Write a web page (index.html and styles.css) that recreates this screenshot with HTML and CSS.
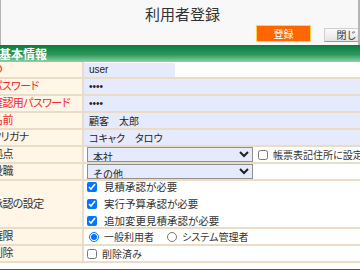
FILE: index.html
```html
<!DOCTYPE html>
<html lang="ja">
<head>
<meta charset="UTF-8">
<title>利用者登録</title>
<link rel="stylesheet" href="styles.css">
</head>
<body>
<div class="header">
    <h1 class="title">利用者登録</h1>
    <div class="actions">
        <button class="btn btn-primary">登録</button>
        <button class="btn">閉じる</button>
    </div>
</div>

<div class="section">
    <div class="section-title">基本情報</div>
    <table class="form">
        <colgroup>
            <col class="label-col">
            <col>
        </colgroup>
        <tr class="first-row">
            <td class="label required">ID</td>
            <td class="value"><input type="text" class="field short" value="user"></td>
        </tr>
        <tr>
            <td class="label required">パスワード</td>
            <td class="value"><input type="password" class="field" value="pass"></td>
        </tr>
        <tr>
            <td class="label required">確認用パスワード</td>
            <td class="value"><input type="password" class="field" value="pass"></td>
        </tr>
        <tr>
            <td class="label required">名前</td>
            <td class="value"><input type="text" class="field" value="顧客　太郎"></td>
        </tr>
        <tr>
            <td class="label">フリガナ</td>
            <td class="value"><input type="text" class="field" value="コキャク　タロウ"></td>
        </tr>
        <tr>
            <td class="label">拠点</td>
            <td class="value">
                <div class="inline">
                    <select class="select"><option>本社</option></select>
                    <label class="check"><input type="checkbox"> 帳票表記住所に設定する</label>
                </div>
            </td>
        </tr>
        <tr>
            <td class="label">役職</td>
            <td class="value"><select class="select"><option>その他</option></select></td>
        </tr>
        <tr class="multi-row">
            <td class="label">承認の設定</td>
            <td class="value">
                <div class="check-list">
                    <label class="check"><input type="checkbox" checked> 見積承認が必要</label>
                    <label class="check"><input type="checkbox" checked> 実行予算承認が必要</label>
                    <label class="check"><input type="checkbox" checked> 追加変更見積承認が必要</label>
                </div>
            </td>
        </tr>
        <tr>
            <td class="label">権限</td>
            <td class="value">
                <div class="inline radios">
                    <label class="check"><input type="radio" name="role" checked> 一般利用者</label>
                    <label class="check"><input type="radio" name="role"> システム管理者</label>
                </div>
            </td>
        </tr>
        <tr class="last-row">
            <td class="label">削除</td>
            <td class="value"><label class="check"><input type="checkbox"> 削除済み</label></td>
        </tr>
    </table>
    <div class="section-title next"></div>
</div>
</body>
</html>
```

FILE: styles.css
```css
body {
    margin: 0;
    width: 360px;
    height: 270px;
    overflow: hidden;
    background-color: #fff;
    font-family: "Noto Sans CJK JP", sans-serif;
    color: #333;
}

.header {
    height: 45px;
    box-sizing: border-box;
    border-left: 1px solid #b4b4b4;
    border-right: 2px solid #b4b4b4;
    background-color: #f8f8f8;
    overflow: hidden;
}

.title {
    margin: 0;
    padding: 5px 0 0 6px;
    text-align: center;
    font-size: 15px;
    font-weight: normal;
    line-height: 18px;
    color: #333;
}

.actions {
    display: flex;
    align-items: flex-end;
    gap: 13px;
    margin-top: 2px;
    padding-left: 255px;
}

.btn {
    flex: none;
    width: 55px;
    height: 14px;
    padding: 0;
    font-family: "Noto Sans CJK JP", sans-serif;
    font-size: 10px;
    line-height: 12px;
    color: #333;
    background: linear-gradient(#fbfbfb, #e4e4e4);
    border: 1px solid #cfcfcf;
    border-right-color: #9a9a9a;
    border-bottom-color: #9a9a9a;
}

.btn-primary {
    height: 17px;
    color: #fff;
    background: #ff6600;
    border: 1px solid #ffd34d;
}

.section {
    margin-left: -13px;
    width: 373px;
}

.section-title {
    height: 17px;
    padding-left: 12px;
    background: linear-gradient(#0a7c3d, #2a985a 55%, #8ed0a5);
    color: #fff;
    font-size: 12px;
    font-weight: bold;
    line-height: 17px;
}

.section-title.next {
    margin-top: 6px;
}

.form {
    width: 100%;
    table-layout: fixed;
    border-spacing: 0;
}

.label-col {
    width: 97px;
}

.form td {
    height: 15px;
    padding: 0;
    border-bottom: 2px solid #eadcc6;
    font-size: 10px;
    line-height: 15px;
    vertical-align: middle;
}

.form .label {
    padding-left: 5px;
    background-color: #fff6e7;
    border-right: 2px solid #eadcc6;
    font-family: "Liberation Sans", "Noto Sans CJK JP", sans-serif;
    font-size: 11px;
    font-feature-settings: "palt";
    letter-spacing: -0.6px;
    color: #333;
    white-space: nowrap;
}

.form .label.required {
    color: #ee2a2a;
}

.form .value {
    background-color: #fff;
}

.first-row td {
    height: 14px;
}

.multi-row td {
    height: 46px;
}

.last-row td {
    height: 13px;
}

.field {
    display: block;
    box-sizing: border-box;
    width: 100%;
    height: 15px;
    margin: 0;
    padding: 0 5px;
    border: none;
    background-color: #e6eafd;
    font-family: "Liberation Sans", "Noto Sans CJK JP", sans-serif;
    font-size: 10px;
    font-feature-settings: "palt";
    color: #222;
}

.first-row .field {
    height: 14px;
}

.field.short {
    width: 91px;
}

.select {
    display: block;
    flex: none;
    box-sizing: border-box;
    width: 166px;
    height: 15px;
    margin: 0 0 0 3px;
    padding: 0 1px;
    border: 1px solid #8f8f8f;
    border-radius: 0;
    background-color: #e6eafd;
    font-family: "Noto Sans CJK JP", sans-serif;
    font-size: 10px;
    line-height: 13px;
    color: #222;
}

.inline {
    display: flex;
    align-items: center;
}

.inline .check {
    padding-left: 5px;
}

.radios .check + .check {
    padding-left: 13px;
}

.check {
    display: flex;
    align-items: center;
    gap: 5px;
    padding-left: 3px;
    font-size: 10px;
    line-height: 12px;
    font-feature-settings: "palt";
    white-space: nowrap;
    color: #333;
}

.check input {
    flex: none;
    width: 10px;
    height: 10px;
    margin: 0;
}

.check-list {
    display: flex;
    flex-direction: column;
    gap: 5px;
}

.check-list .check {
    height: 12px;
    gap: 7px;
    font-size: 10.5px;
}
```
